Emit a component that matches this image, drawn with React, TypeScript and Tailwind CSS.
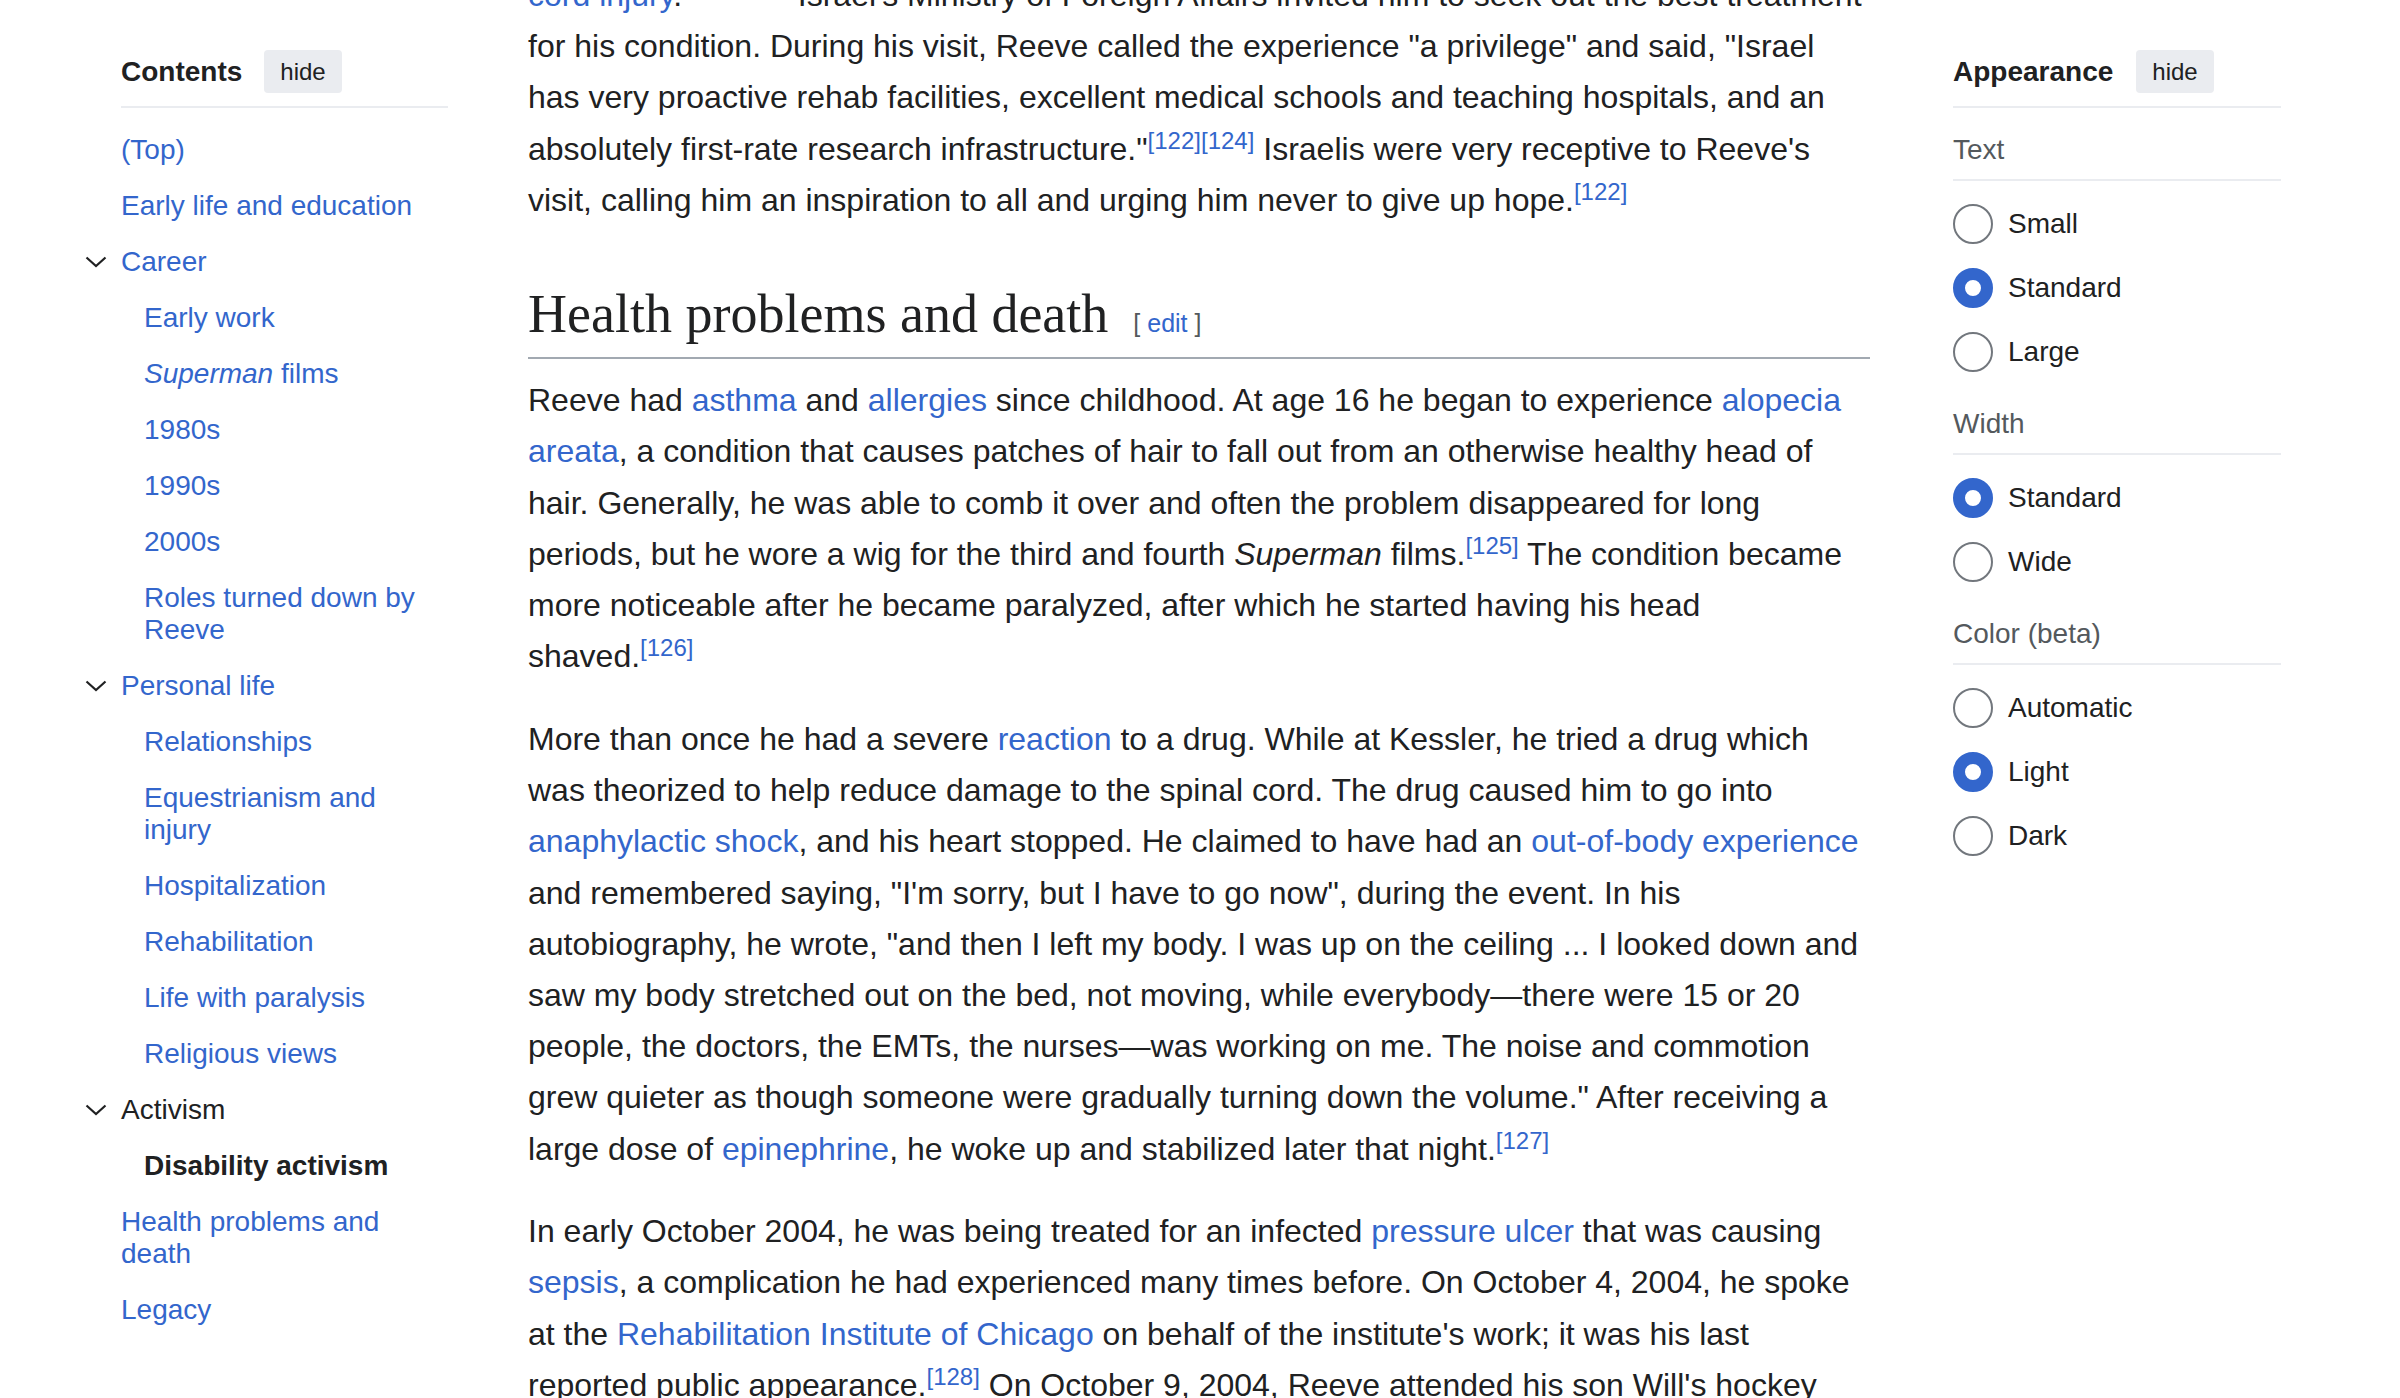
import type { ReactNode } from "react";

const SANS = "font-['Liberation_Sans',Arial,sans-serif]";

type TocItem = {
	label: ReactNode;
	level: 1 | 2;
	toggle?: boolean;
	active?: boolean;
	plain?: boolean;
};

const TOC: TocItem[] = [
	{ label: "(Top)", level: 1 },
	{ label: "Early life and education", level: 1 },
	{ label: "Career", level: 1, toggle: true },
	{ label: "Early work", level: 2 },
	{
		label: (
			<>
				<i>Superman</i> films
			</>
		),
		level: 2,
	},
	{ label: "1980s", level: 2 },
	{ label: "1990s", level: 2 },
	{ label: "2000s", level: 2 },
	{ label: "Roles turned down by Reeve", level: 2 },
	{ label: "Personal life", level: 1, toggle: true },
	{ label: "Relationships", level: 2 },
	{ label: "Equestrianism and injury", level: 2 },
	{ label: "Hospitalization", level: 2 },
	{ label: "Rehabilitation", level: 2 },
	{ label: "Life with paralysis", level: 2 },
	{ label: "Religious views", level: 2 },
	{ label: "Activism", level: 1, toggle: true, plain: true },
	{ label: "Disability activism", level: 2, active: true },
	{ label: "Health problems and death", level: 1 },
	{ label: "Legacy", level: 1 },
];

const APPEARANCE = [
	{ title: "Text", options: ["Small", "Standard", "Large"], checked: "Standard" },
	{ title: "Width", options: ["Standard", "Wide"], checked: "Standard" },
	{ title: "Color (beta)", options: ["Automatic", "Light", "Dark"], checked: "Light" },
];

const L = ({ children }: { children: ReactNode }) => (
	<a className="text-[#3366cc]">{children}</a>
);

const Ref = ({ n }: { n: string }) => (
	<sup className="relative -top-[11px] text-[24px] leading-none align-baseline text-[#3366cc]">
		{n}
	</sup>
);

// keeps the last word glued to its reference marks
const NoWrap = ({ children }: { children: ReactNode }) => (
	<span className="whitespace-nowrap">{children}</span>
);

const Chevron = () => (
	<svg width="22" height="12" viewBox="0 0 22 12" fill="none">
		<polyline
			points="1.5,1.5 11,10 20.5,1.5"
			stroke="#202122"
			strokeWidth="2.2"
			strokeLinejoin="miter"
		/>
	</svg>
);

const HideButton = () => (
	<button className="h-[43px] px-[16px] rounded-[4px] bg-[#eaecf0] text-[24px] text-[#202122]">
		hide
	</button>
);

const Radio = ({ checked }: { checked: boolean }) => (
	<span
		className={
			checked
				? "w-[40px] h-[40px] rounded-full border-[12px] border-[#3366cc] bg-white shrink-0"
				: "w-[40px] h-[40px] rounded-full border-2 border-[#72777d] bg-white shrink-0"
		}
	/>
);

export default function App() {
	return (
		<div
			className={`${SANS} w-[2400px] h-[1398px] overflow-hidden bg-white text-[#202122] flex items-start pl-[121px]`}
		>
			{/* table of contents */}
			<nav className="w-[327px] shrink-0 pt-[50px]">
				<div className="flex items-center gap-[22px] pb-[13px] border-b-2 border-[#eaecf0]">
					<span className="text-[28px] font-bold">Contents</span>
					<HideButton />
				</div>
				<ul className="mt-[14px] -ml-[36px]">
					{TOC.map((item, index) => (
						<li
							key={`Toc__${index}`}
							className="flex items-start py-3 text-[28px] leading-[32px]"
						>
							<span className="w-[36px] h-[32px] shrink-0 flex items-center">
								{item.toggle && <Chevron />}
							</span>
							<span
								className={
									item.active
										? "pl-[23px] font-bold text-[#202122]"
										: item.plain
											? "text-[#202122]"
											: item.level === 2
												? "pl-[23px] text-[#3366cc]"
												: "text-[#3366cc]"
								}
							>
								{item.label}
							</span>
						</li>
					))}
				</ul>
			</nav>

			{/* article body */}
			<main className="w-[1342px] shrink-0 ml-[80px] -mt-[30px] text-[32px] leading-[51.2px]">
				<p>
					<NoWrap>
						<L>cord injury</L>.<Ref n="[122][123]" />
					</NoWrap>{" "}
					Israel's Ministry of Foreign Affairs invited him to seek out the best
					treatment for his condition. During his visit, Reeve called the
					experience "a privilege" and said, "Israel has very proactive rehab
					facilities, excellent medical schools and teaching hospitals, and an
					absolutely first-rate research{" "}
					<NoWrap>
						infrastructure."
						<Ref n="[122]" />
						<Ref n="[124]" />
					</NoWrap>{" "}
					Israelis were very receptive to Reeve's visit, calling him an
					inspiration to all and urging him never to give up{" "}
					<NoWrap>
						hope.
						<Ref n="[122]" />
					</NoWrap>
				</p>

				<div className="mt-[53px] flex items-baseline gap-[25px] pb-[8px] border-b-2 border-[#a2a9b1]">
					<h2 className="font-['Liberation_Serif',serif] text-[54px] leading-[70px] text-[#202122]">
						Health problems and death
					</h2>
					<span className="text-[25px] text-[#54595d]">
						[ <L>edit</L> ]
					</span>
				</div>

				<p className="mt-[16px]">
					Reeve had <L>asthma</L> and <L>allergies</L> since childhood. At age 16
					he began to experience <L>alopecia areata</L>, a condition that causes
					patches of hair to fall out from an otherwise healthy head of hair.
					Generally, he was able to comb it over and often the problem
					disappeared for long periods, but he wore a wig for the third and fourth{" "}
					<i>Superman</i>{" "}
					<NoWrap>
						films.
						<Ref n="[125]" />
					</NoWrap>{" "}
					The condition became more noticeable after he became paralyzed, after
					which he started having his head{" "}
					<NoWrap>
						shaved.
						<Ref n="[126]" />
					</NoWrap>
				</p>

				<p className="mt-[31.5px]">
					More than once he had a severe <L>reaction</L> to a drug. While at
					Kessler, he tried a drug which was theorized to help reduce damage to
					the spinal cord. The drug caused him to go into{" "}
					<L>anaphylactic shock</L>, and his heart stopped. He claimed to have had
					an <L>out-of-body experience</L> and remembered saying, "I'm sorry, but
					I have to go now", during the event. In his autobiography, he wrote,
					"and then I left my body. I was up on the ceiling ... I looked down and
					saw my body stretched out on the bed, not moving, while everybody—there
					were 15 or 20 people, the doctors, the EMTs, the nurses—was working on
					me. The noise and commotion grew quieter as though someone were
					gradually turning down the volume." After receiving a large dose of{" "}
					<L>epinephrine</L>, he woke up and stabilized later that{" "}
					<NoWrap>
						night.
						<Ref n="[127]" />
					</NoWrap>
				</p>

				<p className="mt-[31.5px]">
					In early October 2004, he was being treated for an infected{" "}
					<L>pressure ulcer</L> that was causing <L>sepsis</L>, a complication he
					had experienced many times before. On October 4, 2004, he spoke at the{" "}
					<L>Rehabilitation Institute of Chicago</L> on behalf of the institute's
					work; it was his last reported public{" "}
					<NoWrap>
						appearance.
						<Ref n="[128]" />
					</NoWrap>{" "}
					On October 9, 2004, Reeve attended his son Will's hockey game in Wilton,
					Connecticut.
				</p>
			</main>

			{/* appearance panel */}
			<aside className="w-[328px] shrink-0 ml-[83px] pt-[50px]">
				<div className="flex items-center gap-[23px] pb-[13px] border-b-2 border-[#eaecf0]">
					<span className="text-[28px] font-bold">Appearance</span>
					<HideButton />
				</div>
				{APPEARANCE.map((group, index) => (
					<section
						key={`Appearance__${group.title}`}
						className={index === 0 ? "mt-[26px]" : "mt-[36px]"}
					>
						<h3 className="text-[28px] leading-[32px] text-[#54595d] pb-[13px] border-b-2 border-[#eaecf0]">
							{group.title}
						</h3>
						<ul className="mt-[23px] flex flex-col gap-[24px]">
							{group.options.map((option) => (
								<li
									key={`Appearance__${group.title}__${option}`}
									className="flex items-center gap-[15px] h-[40px]"
								>
									<Radio checked={option === group.checked} />
									<span className="text-[28px] text-[#202122]">{option}</span>
								</li>
							))}
						</ul>
					</section>
				))}
			</aside>
		</div>
	);
}
